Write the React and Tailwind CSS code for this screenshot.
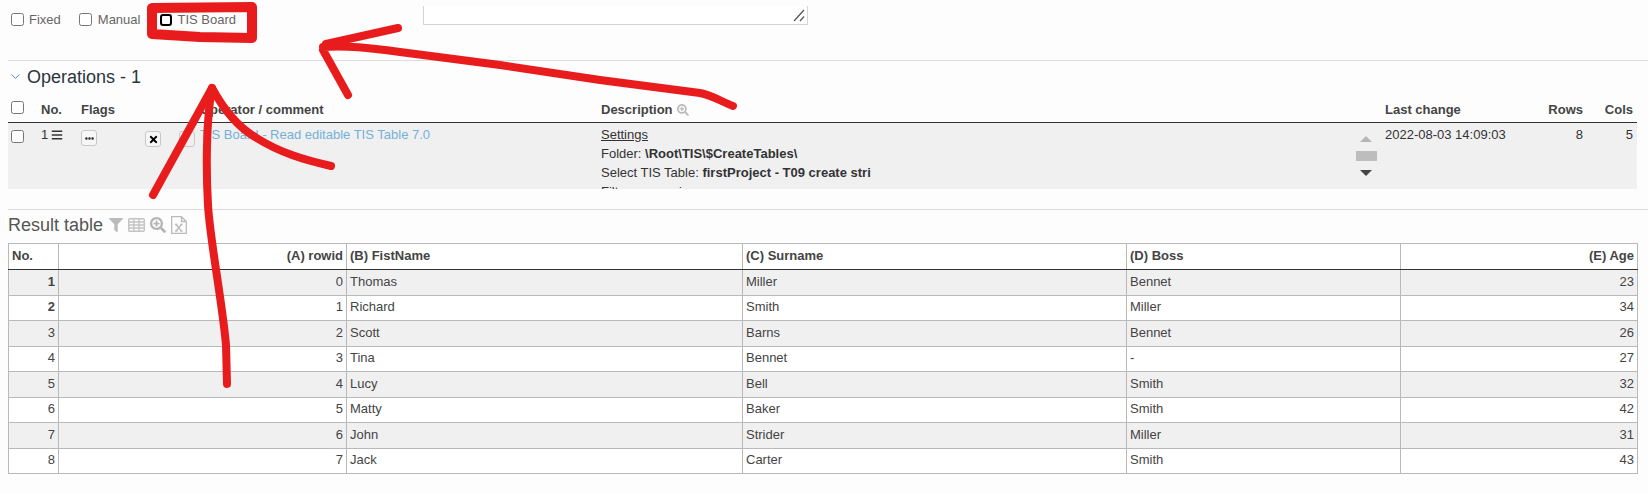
import React from "react";
import { ChevronDown } from "lucide-react";
import { FaFilter, FaSearchPlus, FaBars, FaEllipsisH, FaTimes } from "react-icons/fa";

const rows = [
  ["1", "0", "Thomas", "Miller", "Bennet", "23"],
  ["2", "1", "Richard", "Smith", "Miller", "34"],
  ["3", "2", "Scott", "Barns", "Bennet", "26"],
  ["4", "3", "Tina", "Bennet", "-", "27"],
  ["5", "4", "Lucy", "Bell", "Smith", "32"],
  ["6", "5", "Matty", "Baker", "Smith", "42"],
  ["7", "6", "John", "Strider", "Miller", "31"],
  ["8", "7", "Jack", "Carter", "Smith", "43"],
];

const Check = ({ className = "" }) => (
  <input type="checkbox" className={"w-[13px] h-[13px] m-0 " + className} />
);

// red marker strokes drawn over the screenshot
const Annotation = () => (
  <svg className="absolute left-0 top-0 pointer-events-none" width="1648" height="493" fill="none" stroke="#e81c1c" strokeLinecap="round" strokeLinejoin="round">
    <path strokeWidth="10" d="M152 8 L252 7 L252 38 L200 37 L152 34 Z" />
    <path strokeWidth="8" d="M398 28 L326 44 M323 50 L348 95 M323 47 C345 45 370 48 400 52 L500 65 L600 80 L700 93 C712 95 722 102 733 106" />
    <path strokeWidth="8" d="M153 195 L212 88 C225 112 240 128 255 137 C280 153 305 160 331 166" />
    <path strokeWidth="8" d="M212 88 C206 120 206 170 208 205 C210 240 222 300 226 345 L227 384" />
  </svg>
);

const GridIcon = () => (
  <svg className="ml-[5px]" width="17" height="14" viewBox="0 0 17 14" fill="none" stroke="#c4c4c4" strokeWidth="1.4">
    <rect x="0.7" y="0.7" width="15.6" height="12.6" rx="1" />
    <path d="M0.7 4 H16.3 M0.7 7 H16.3 M0.7 10 H16.3 M5.9 0.7 V13.3 M11.1 0.7 V13.3" />
  </svg>
);

const ExcelIcon = () => (
  <svg className="ml-[5px]" width="16" height="18" viewBox="0 0 16 18" fill="none" stroke="#bbb" strokeWidth="1.3">
    <path d="M0.7 0.7 H10.5 L15.3 5.5 V17.3 H0.7 Z M10.5 0.7 V5.5 H15.3" />
    <path d="M5 8.5 L10.5 15 M10.5 8.5 L5 15 M4 8.5 H6.5 M9.2 8.5 H11.5 M4 15 H6.5 M9.2 15 H11.5" />
  </svg>
);

const Th = ({ className = "", children }) => (
  <th className={"border border-[#b9b9b9] border-b-[#333] px-[3px] pb-[2px] font-bold text-[#444] " + className}>{children}</th>
);

const Td = ({ className = "", children }) => (
  <td className={"border border-[#b9b9b9] px-[3px] pb-[2px] " + className}>{children}</td>
);

export default function App() {
  return (
    <div className="relative w-[1648px] h-[493px] overflow-hidden bg-[#fdfdfd] text-[13px] leading-[19px] text-[#333] font-['Liberation_Sans',Arial,sans-serif]">
      <div className="ml-2 h-[61px] border-b border-[#dcdcdc] flex items-start">
        <div className="flex items-center pt-[10px] text-[#666]">
          <label className="ml-[3px] flex items-center gap-[5px]"><Check />Fixed</label>
          <label className="ml-[18px] flex items-center gap-[6px]"><Check />Manual</label>
          <label className="ml-[20px] flex items-center gap-[5px]">
            <span className="w-[12px] h-[12px] rounded-[3px] border-2 border-black bg-white"></span>TIS Board
          </label>
        </div>
        <div className="relative ml-[187px] mt-[6px] w-[385px] h-[19px] border-x border-b border-[#d3d6de] bg-white">
          <svg className="absolute right-[2px] bottom-[2px]" width="12" height="13" stroke="#555" strokeWidth="1.2">
            <path d="M1 12 L11 1 M7 12 L11 7.5" />
          </svg>
        </div>
      </div>

      <div className="ml-2 h-[31px] flex items-center">
        <ChevronDown size={15} strokeWidth={1.5} className="text-[#3f86c0]" />
        <span className="ml-[4px] text-[18px] leading-[24px] text-[#2b3540]">Operations - 1</span>
      </div>

      <div className="ml-2 w-[1629px]">
        <div className="h-[31px] pt-[5px] border-b border-[#333] flex items-center font-bold text-[#444]">
          <Check className="ml-[3px] mb-[4px]" />
          <span className="ml-[17px] w-[40px]">No.</span>
          <span className="w-[119px]">Flags</span>
          <span className="w-[401px]">Operator / comment</span>
          <span className="flex items-center w-[784px]">Description<FaSearchPlus size={12} className="ml-[4px] text-[#bbb]" /></span>
          <span className="w-[130px]">Last change</span>
          <span className="w-[68px] text-right">Rows</span>
          <span className="w-[50px] text-right">Cols</span>
        </div>
        <div className="h-[66px] bg-[#f0f0f1] flex items-start overflow-hidden">
          <Check className="ml-[3px] mt-[7px]" />
          <div className="ml-[17px] w-[40px] flex items-center pt-[2px]">1<FaBars size={12} className="ml-[3px] text-[#333]" /></div>
          <div className="w-[64px] pt-[7px]">
            <span className="flex items-center justify-center w-[16px] h-[16px] rounded-[3px] border border-[#c8c8c8] bg-[#f7f7f7]"><FaEllipsisH size={9} /></span>
          </div>
          <div className="w-[34px] pt-[8px]">
            <span className="flex items-center justify-center w-[16px] h-[16px] rounded-[3px] border border-[#c8c8c8] bg-[#f7f7f7]"><FaTimes size={11} className="text-black" /></span>
          </div>
          <div className="w-[21px] pt-[8px]">
            <span className="block w-[16px] h-[16px] rounded-[3px] border border-[#c8c8c8]"></span>
          </div>
          <div className="w-[401px] text-[#74b1d8] pt-[2px]">TIS Board - Read editable TIS Table 7.0</div>
          <div className="w-[745px] pt-[2px]">
            <div className="underline">Settings</div>
            <div>Folder: <span className="font-bold">\Root\TIS\$CreateTables\</span></div>
            <div>Select TIS Table: <span className="font-bold">firstProject - T09 create stri</span></div>
            <div>Filter expression</div>
          </div>
          <div className="w-[39px] pl-[10px] pt-[13px] flex flex-col">
            <span className="ml-[4px] w-0 h-0 border-x-[6px] border-x-transparent border-b-[6px] border-b-[#b5b5b5]"></span>
            <span className="mt-[9px] w-[21px] h-[10px] bg-[#bdbdbd]"></span>
            <span className="ml-[4px] mt-[9px] w-0 h-0 border-x-[6px] border-x-transparent border-t-[6px] border-t-[#444]"></span>
          </div>
          <div className="w-[130px] pt-[2px]">2022-08-03 14:09:03</div>
          <div className="w-[68px] pt-[2px] text-right">8</div>
          <div className="w-[50px] pt-[2px] text-right">5</div>
        </div>
      </div>

      <div className="ml-2 mt-[20px] border-t border-[#dcdcdc] pb-[3px] flex items-center h-[34px]">
        <span className="text-[18px] leading-[24px] text-[#555]">Result table</span>
        <FaFilter size={14} className="ml-[6px] text-[#bbb]" />
        <GridIcon />
        <FaSearchPlus size={16} className="ml-[5px] text-[#b5b5b5]" />
        <ExcelIcon />
      </div>

      <table className="ml-2 w-[1629px] table-fixed border-collapse">
        <colgroup>
          <col className="w-[50px]" />
          <col className="w-[288px]" />
          <col className="w-[396px]" />
          <col className="w-[384px]" />
          <col className="w-[274px]" />
          <col className="w-[237px]" />
        </colgroup>
        <thead>
          <tr className="h-[26px] bg-white text-left">
            <Th>No.</Th>
            <Th className="text-right">(A) rowid</Th>
            <Th>(B) FistName</Th>
            <Th>(C) Surname</Th>
            <Th>(D) Boss</Th>
            <Th className="text-right">(E) Age</Th>
          </tr>
        </thead>
        <tbody className="text-[#444]">
          {rows.map((r, i) => (
            <tr key={r[0]} className={i % 2 === 0 ? "h-[25.5px] bg-[#f0f0f1]" : "h-[25.5px] bg-white"}>
              <Td className={i < 2 ? "text-right font-bold" : "text-right"}>{r[0]}</Td>
              <Td className="text-right">{r[1]}</Td>
              <Td>{r[2]}</Td>
              <Td>{r[3]}</Td>
              <Td>{r[4]}</Td>
              <Td className="text-right">{r[5]}</Td>
            </tr>
          ))}
        </tbody>
      </table>

      <Annotation />
    </div>
  );
}
